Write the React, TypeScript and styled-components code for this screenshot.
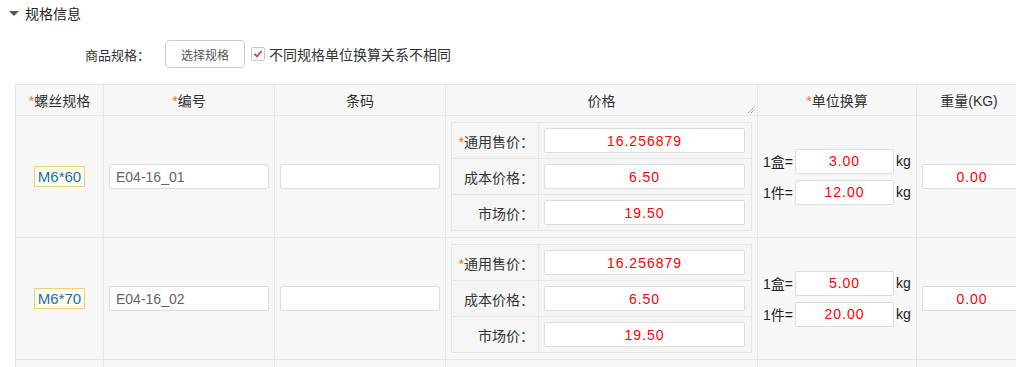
import React from 'react';
import styled, { createGlobalStyle } from 'styled-components';

const GlobalStyle = createGlobalStyle`
  html, body {
    margin: 0;
    padding: 0;
    background: #fff;
    overflow: hidden;
  }
  body {
    font-family: "Liberation Sans", "Noto Sans CJK SC", sans-serif;
    font-size: 14px;
    color: #333;
  }
`;

const Page = styled.div`
  width: 1016px;
  height: 367px;
  overflow: hidden;
`;

const SectionHeader = styled.div`
  height: 26px;
  display: flex;
  align-items: center;
  padding-left: 9px;
  gap: 6px;
  color: #222;
`;

const Caret = styled.span`
  width: 0;
  height: 0;
  border-left: 5px solid transparent;
  border-right: 5px solid transparent;
  border-top: 5px solid #555;
`;

const FormRow = styled.div`
  margin-top: 14px;
  height: 28px;
  display: flex;
  align-items: center;
  padding-left: 85px;
`;

const FormLabel = styled.span`
  width: 80px;
  font-size: 13px;
  color: #333;
`;

const Button = styled.button`
  width: 80px;
  height: 28px;
  border: 1px solid #ccc;
  border-radius: 4px;
  background: #fff;
  font-family: inherit;
  font-size: 12px;
  color: #555;
  padding: 0;
`;

const CheckLabel = styled.label`
  display: flex;
  align-items: center;
  margin-left: 6px;
  gap: 4px;
  color: #333;
`;

const CheckBox = styled.span`
  width: 12px;
  height: 12px;
  border: 1px solid #c8c8c8;
  border-radius: 2px;
  background: #fff;
  display: flex;
  align-items: center;
  justify-content: center;
`;

const Table = styled.table`
  margin: 16px 0 0 15px;
  border-collapse: collapse;
  table-layout: fixed;
  width: 1006px;
  background: #f7f7f7;
`;

const Col = styled.col<{ $w: number }>`
  width: ${(p) => p.$w}px;
`;

const Th = styled.th`
  position: relative;
  height: 30px;
  padding: 0;
  border: 1px solid #e6e6e6;
  font-weight: normal;
  color: #333;
  text-align: center;
  white-space: nowrap;
`;

const Star = styled.span`
  color: #f2711c;
`;

const Td = styled.td`
  height: 122px;
  box-sizing: border-box;
  padding: 0 5px;
  border: 1px solid #e6e6e6;
  text-align: center;
  vertical-align: middle;
`;

const Tag = styled.span`
  display: inline-block;
  padding: 0 3px;
  line-height: 19px;
  border: 1px solid #f0cf7a;
  background: #fffdea;
  color: #1b6fb5;
  font-size: 15px;
`;

const TextInput = styled.input<{ $w?: number; $num?: boolean }>`
  box-sizing: border-box;
  width: ${(p) => (p.$w ? `${p.$w}px` : '100%')};
  height: 25px;
  border: 1px solid #ddd;
  border-radius: 2px;
  background: #fff;
  padding: 0 6px;
  font-family: "Liberation Sans", "Noto Sans CJK SC", sans-serif;
  font-size: 14px;
  color: ${(p) => (p.$num ? '#f00' : '#666')};
  text-align: ${(p) => (p.$num ? 'center' : 'left')};
  letter-spacing: ${(p) => (p.$num ? '1px' : '0')};
  outline: none;
  display: block;
`;

const PriceTd = styled(Td)`
  padding: 5px;
`;

const PriceTable = styled.table`
  width: 100%;
  border-collapse: collapse;
  table-layout: fixed;
  background: #f5f5f5;
`;

const PriceLabel = styled.td`
  width: 87px;
  height: 36px;
  box-sizing: border-box;
  padding: 0 4px 0 0;
  border: 1px solid #e6e6e6;
  text-align: right;
  color: #333;
`;

const PriceValue = styled.td`
  padding: 0 6px 0 5px;
  border: 1px solid #e6e6e6;
`;

const Resize = styled.svg`
  position: absolute;
  right: 1px;
  bottom: 1px;
`;

const UnitTd = styled(Td)`
  text-align: left;
`;

const UnitList = styled.div`
  display: flex;
  flex-direction: column;
  gap: 6px;
`;

const UnitLine = styled.div`
  display: flex;
  align-items: center;
  color: #222;
`;

const UnitName = styled.span`
  width: 32px;
`;

const Kg = styled.span`
  margin-left: 2px;
`;

const WeightTd = styled(Td)`
  overflow: visible;
`;

type Row = {
  spec: string;
  code: string;
  prices: string[];
  units: { name: string; value: string }[];
  weight: string;
};

const rows: Row[] = [
  {
    spec: 'M6*60',
    code: 'E04-16_01',
    prices: ['16.256879', '6.50', '19.50'],
    units: [
      { name: '1盒=', value: '3.00' },
      { name: '1件=', value: '12.00' },
    ],
    weight: '0.00',
  },
  {
    spec: 'M6*70',
    code: 'E04-16_02',
    prices: ['16.256879', '6.50', '19.50'],
    units: [
      { name: '1盒=', value: '5.00' },
      { name: '1件=', value: '20.00' },
    ],
    weight: '0.00',
  },
];

const priceLabels = [
  <>
    <Star>*</Star>通用售价：
  </>,
  <>成本价格：</>,
  <>市场价：</>,
];

const App: React.FC = () => {
  return (
    <Page>
      <GlobalStyle />
      <SectionHeader>
        <Caret />
        规格信息
      </SectionHeader>
      <FormRow>
        <FormLabel>商品规格：</FormLabel>
        <Button>选择规格</Button>
        <CheckLabel>
          <CheckBox>
            <svg width="10" height="10" viewBox="0 0 10 10">
              <polyline points="1.5,5 4,7.5 8.5,2" fill="none" stroke="#e4393c" strokeWidth="1.8" />
            </svg>
          </CheckBox>
          不同规格单位换算关系不相同
        </CheckLabel>
      </FormRow>

      <Table>
        <colgroup>
          <Col $w={88} />
          <Col $w={171} />
          <Col $w={171} />
          <Col $w={312} />
          <Col $w={159} />
          <Col $w={105} />
        </colgroup>
        <thead>
          <tr>
            <Th>
              <Star>*</Star>螺丝规格
            </Th>
            <Th>
              <Star>*</Star>编号
            </Th>
            <Th>条码</Th>
            <Th>
              价格
              <Resize width="9" height="9" viewBox="0 0 9 9">
                <line x1="1" y1="8" x2="8" y2="1" stroke="#777" strokeWidth="1" strokeDasharray="1 1" />
                <line x1="4" y1="8" x2="8" y2="4" stroke="#777" strokeWidth="1" strokeDasharray="1 1" />
              </Resize>
            </Th>
            <Th>
              <Star>*</Star>单位换算
            </Th>
            <Th>重量(KG)</Th>
          </tr>
        </thead>
        <tbody>
          {rows.map((r) => (
            <tr key={r.spec}>
              <Td>
                <Tag>{r.spec}</Tag>
              </Td>
              <Td>
                <TextInput readOnly value={r.code} />
              </Td>
              <Td>
                <TextInput readOnly value="" />
              </Td>
              <PriceTd>
                <PriceTable>
                  <tbody>
                    {r.prices.map((p, i) => (
                      <tr key={i}>
                        <PriceLabel>{priceLabels[i]}</PriceLabel>
                        <PriceValue>
                          <TextInput $num readOnly value={p} />
                        </PriceValue>
                      </tr>
                    ))}
                  </tbody>
                </PriceTable>
              </PriceTd>
              <UnitTd>
                <UnitList>
                  {r.units.map((u) => (
                    <UnitLine key={u.name}>
                      <UnitName>{u.name}</UnitName>
                      <TextInput $num $w={99} readOnly value={u.value} />
                      <Kg>kg</Kg>
                    </UnitLine>
                  ))}
                </UnitList>
              </UnitTd>
              <WeightTd>
                <TextInput $num $w={100} readOnly value={r.weight} />
              </WeightTd>
            </tr>
          ))}
          <tr>
            <Td />
            <Td />
            <Td />
            <Td />
            <Td />
            <Td />
          </tr>
        </tbody>
      </Table>
    </Page>
  );
};

export default App;
